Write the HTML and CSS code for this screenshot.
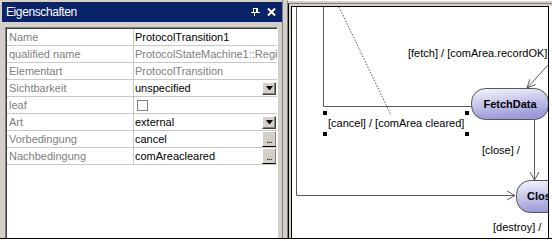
FILE: index.html
```html
<!DOCTYPE html>
<html lang="de">
<head>
    <meta charset="UTF-8">
    <title>Eigenschaften</title>
    <link rel="stylesheet" href="styles.css">
</head>
<body>
    <div class="window">
        <section class="props">
            <header class="props-title">
                <span class="title-text">Eigenschaften</span>
                <span class="title-tools">
                    <svg class="pin" width="9" height="8" viewBox="0 0 9 8">
                        <path d="M2.5 0V4.5M2 0.5H6M5.5 0V4.5M6.5 0V4.5M0 4.5H9M3.5 5V8" stroke="#fff" fill="none"/>
                    </svg>
                    <svg class="close" width="9" height="8" viewBox="0 0 9 8">
                        <path d="M1 0.5L8 7.5M8 0.5L1 7.5" stroke="#fff" stroke-width="2" fill="none"/>
                    </svg>
                </span>
            </header>
            <div class="grid">
                <div class="grid-body">
                    <div class="row"><div class="key">Name</div><div class="val">ProtocolTransition1</div></div>
                    <div class="row"><div class="key">qualified name</div><div class="val readonly">ProtocolStateMachine1::Region1</div></div>
                    <div class="row"><div class="key">Elementart</div><div class="val readonly">ProtocolTransition</div></div>
                    <div class="row"><div class="key">Sichtbarkeit</div><div class="val">unspecified<span class="drop"><i></i></span></div></div>
                    <div class="row"><div class="key">leaf</div><div class="val"><span class="check"></span></div></div>
                    <div class="row"><div class="key">Art</div><div class="val">external<span class="drop"><i></i></span></div></div>
                    <div class="row"><div class="key">Vorbedingung</div><div class="val">cancel<span class="more">...</span></div></div>
                    <div class="row"><div class="key">Nachbedingung</div><div class="val">comAreacleared<span class="more">...</span></div></div>
                </div>
            </div>
        </section>
        <div class="splitter"></div>
        <section class="view">
            <div class="frame">
                <div class="canvas">
                    <svg class="diagram" width="256" height="231" viewBox="292 7 256 231">
                        <defs>
                            <linearGradient id="stateFill" x1="0" y1="0" x2="0.25" y2="1">
                                <stop offset="0" stop-color="#f6f6fd"/>
                                <stop offset="1" stop-color="#9a9ad9"/>
                            </linearGradient>
                        </defs>
                        <g stroke="#5a5a5a" fill="none">
                            <path d="M296.5 7V195.5H515"/>
                            <path d="M507 191L515 195.5L507 200"/>
                            <path d="M323.5 7V106.5H472"/>
                            <path d="M339 7L391 115" stroke-dasharray="1.5 1.5"/>
                            <path d="M549 64L527 88"/>
                            <path d="M535.5 84.5L527 88L529.8 79.4"/>
                            <path d="M534.5 120V180"/>
                            <path d="M530 172L534.5 180L539 172"/>
                        </g>
                        <rect x="471.5" y="88.5" width="77" height="31" rx="14" fill="url(#stateFill)" stroke="#555"/>
                        <text class="state-name" x="510" y="108" text-anchor="middle">FetchData</text>
                        <rect x="516.5" y="180.5" width="72" height="32" rx="14" fill="url(#stateFill)" stroke="#555"/>
                        <text class="state-name" x="527" y="200">Closed</text>
                        <text class="guard" x="408" y="57">[fetch] / [comArea.recordOK]</text>
                        <text class="guard" x="328" y="127">[cancel] / [comArea cleared]</text>
                        <text class="guard" x="482" y="154">[close] /</text>
                        <text class="guard" x="493" y="231">[destroy] /</text>
                        <g fill="#000">
                            <rect x="323" y="111" width="4" height="4"/>
                            <rect x="465" y="111" width="4" height="4"/>
                            <rect x="323" y="132" width="4" height="4"/>
                            <rect x="465" y="132" width="4" height="4"/>
                        </g>
                    </svg>
                </div>
                <div class="edge"></div>
            </div>
        </section>
    </div>
</body>
</html>
```

FILE: styles.css
```css
body {
    margin: 0;
    background-color: #fff;
    font-family: "Liberation Sans", Arial, sans-serif;
    font-size: 11px;
    color: #000;
}

.window {
    display: flex;
    width: 552px;
    height: 238px;
    border-bottom: 1px solid #000;
    background-color: #d4d0c8;
    overflow: hidden;
}

/* property panel */
.props {
    width: 282px;
    box-sizing: border-box;
    padding: 2px 0 0 2px;
    display: flex;
    flex-direction: column;
}

.props-title {
    height: 20px;
    background-color: #0a246a;
    color: #fff;
    display: flex;
    align-items: center;
    justify-content: space-between;
    padding: 0 6px 0 4px;
}

.title-text {
    font-size: 12px;
    letter-spacing: -0.4px;
}

.title-tools {
    display: flex;
    align-items: center;
    gap: 7px;
}

.grid {
    flex: 1;
    margin: 5px 4px 0 3px;
    border-top: 1px solid #808080;
    border-left: 1px solid #808080;
    border-right: 1px solid #fff;
}

.grid-body {
    height: 100%;
    background-color: #fff;
    border-top: 1px solid #404040;
    border-left: 1px solid #404040;
}

.row {
    display: grid;
    grid-template-columns: 127px 1fr;
    height: 17px;
    box-sizing: border-box;
    border-bottom: 1px solid #c8c8c8;
}

.key {
    border-right: 1px solid #c8c8c8;
    padding-left: 2px;
    line-height: 16px;
    color: #808080;
}

.val {
    display: flex;
    align-items: center;
    justify-content: space-between;
    padding-left: 1px;
    white-space: nowrap;
    overflow: hidden;
}

.readonly {
    color: #808080;
}

.drop {
    width: 14px;
    height: 13px;
    box-sizing: border-box;
    margin-right: 1px;
    background-color: #d4d0c8;
    border: 1px solid;
    border-color: #fff #404040 #404040 #fff;
    box-shadow: inset -1px -1px #808080;
    display: flex;
    align-items: center;
    justify-content: center;
}

.drop i {
    width: 1px;
    border-left: 3px solid transparent;
    border-right: 3px solid transparent;
    border-top: 4px solid #000;
}

.more {
    align-self: stretch;
    width: 14px;
    box-sizing: border-box;
    margin-right: 1px;
    background-color: #d4d0c8;
    border: 1px solid;
    border-color: #fff #808080 #000 #fff;
    font-size: 10px;
    line-height: 16px;
    text-align: center;
    letter-spacing: -1px;
}

.check {
    width: 11px;
    height: 11px;
    box-sizing: border-box;
    margin-left: 2px;
    border: 1px solid #808080;
    background-color: #fff;
}

/* splitter and diagram view */
.splitter {
    width: 4px;
    border-left: 1px solid #808080;
}

.view {
    flex: 1;
    display: flex;
    flex-direction: column;
    border-top: 1px solid #fff;
    border-left: 1px solid #808080;
    padding-top: 2px;
}

.frame {
    flex: 1;
    display: flex;
    border-top: 1px solid #808080;
    border-left: 1px solid #000;
    padding: 2px 0 0 2px;
}

.canvas {
    width: 256px;
    background-color: #fff;
    border: 1px solid #000;
    border-bottom: none;
    overflow: hidden;
}

.diagram {
    display: block;
}

.edge {
    flex: 1;
    background-color: #fff;
}

.guard {
    font-family: "Liberation Sans", Arial, sans-serif;
    font-size: 11px;
    fill: #000;
}

.state-name {
    font-family: "Liberation Sans", Arial, sans-serif;
    font-size: 11px;
    font-weight: bold;
    fill: #000;
}
```
